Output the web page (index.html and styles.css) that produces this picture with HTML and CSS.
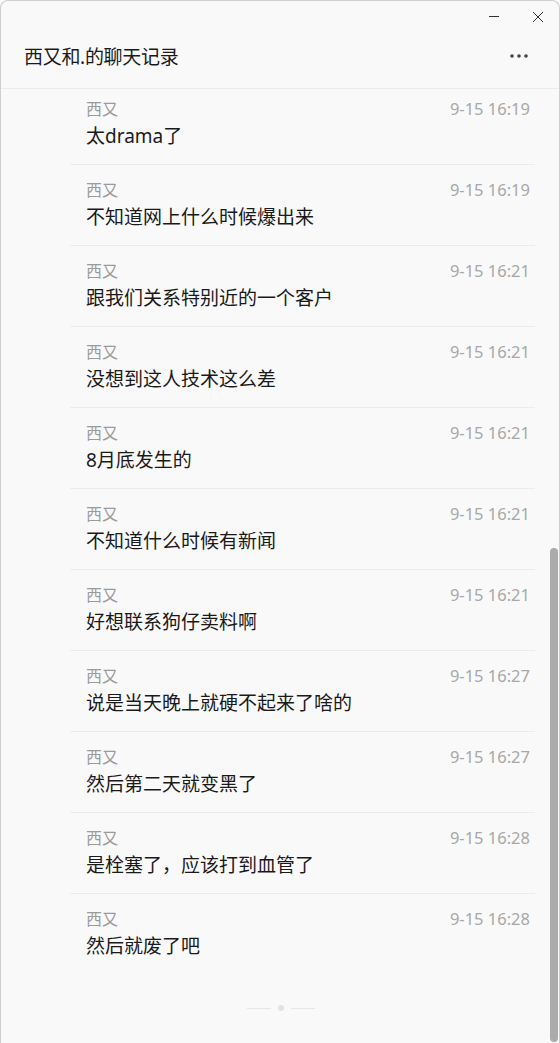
FILE: index.html
```html
<!DOCTYPE html>
<html lang="zh-CN">
<head>
<meta charset="UTF-8">
<title>西又和.的聊天记录</title>
<link rel="stylesheet" href="styles.css">
</head>
<body>

<div class="window">
    <div class="header">
        <div class="caption">
            <span class="cap-btn">
                <svg width="12" height="12" viewBox="0 0 12 12"><path d="M1 5.5h10" stroke="#333" stroke-width="1"/></svg>
            </span>
            <span class="cap-btn">
                <svg width="12" height="12" viewBox="0 0 12 12"><path d="M1 1l10 10M11 1L1 11" stroke="#333" stroke-width="1"/></svg>
            </span>
        </div>
        <div class="title-row">
            <div class="title">西又和.的聊天记录</div>
            <svg class="more" width="20" height="6" viewBox="0 0 20 6"><circle cx="3" cy="3" r="1.8" fill="#444"/><circle cx="10" cy="3" r="1.8" fill="#444"/><circle cx="17" cy="3" r="1.8" fill="#444"/></svg>
        </div>
    </div>

    <div class="list">
        <div class="items">
            <div class="item">
                <div class="meta"><span class="name">西又</span><span class="time">9-15 16:19</span></div>
                <div class="text">太drama了</div>
            </div>
            <div class="item">
                <div class="meta"><span class="name">西又</span><span class="time">9-15 16:19</span></div>
                <div class="text">不知道网上什么时候爆出来</div>
            </div>
            <div class="item">
                <div class="meta"><span class="name">西又</span><span class="time">9-15 16:21</span></div>
                <div class="text">跟我们关系特别近的一个客户</div>
            </div>
            <div class="item">
                <div class="meta"><span class="name">西又</span><span class="time">9-15 16:21</span></div>
                <div class="text">没想到这人技术这么差</div>
            </div>
            <div class="item">
                <div class="meta"><span class="name">西又</span><span class="time">9-15 16:21</span></div>
                <div class="text">8月底发生的</div>
            </div>
            <div class="item">
                <div class="meta"><span class="name">西又</span><span class="time">9-15 16:21</span></div>
                <div class="text">不知道什么时候有新闻</div>
            </div>
            <div class="item">
                <div class="meta"><span class="name">西又</span><span class="time">9-15 16:21</span></div>
                <div class="text">好想联系狗仔卖料啊</div>
            </div>
            <div class="item">
                <div class="meta"><span class="name">西又</span><span class="time">9-15 16:27</span></div>
                <div class="text">说是当天晚上就硬不起来了啥的</div>
            </div>
            <div class="item">
                <div class="meta"><span class="name">西又</span><span class="time">9-15 16:27</span></div>
                <div class="text">然后第二天就变黑了</div>
            </div>
            <div class="item">
                <div class="meta"><span class="name">西又</span><span class="time">9-15 16:28</span></div>
                <div class="text">是栓塞了，应该打到血管了</div>
            </div>
            <div class="item last">
                <div class="meta"><span class="name">西又</span><span class="time">9-15 16:28</span></div>
                <div class="text">然后就废了吧</div>
            </div>
            <div class="end">
                <span class="end-line"></span>
                <span class="end-dot"></span>
                <span class="end-line"></span>
            </div>
        </div>
        <div class="scrollbar"></div>
    </div>
</div>

</body>
</html>
```

FILE: styles.css
```css
html, body {
    height: 100%;
    margin: 0;
    padding: 0;
}
body {
    font-family: "Noto Sans", "Noto Sans CJK SC", sans-serif;
    background: #f9f9f9;
    overflow: hidden;
}
.window {
    box-sizing: border-box;
    height: 1043px;
    border: 1px solid #cfcfcf;
    border-bottom: none;
    border-radius: 8px 8px 0 0;
    background: #f9f9f9;
    display: flex;
    flex-direction: column;
}
.header {
    height: 87px;
    border-bottom: 1px solid #ebebeb;
    flex-shrink: 0;
}
.caption {
    display: flex;
    justify-content: flex-end;
    gap: 32px;
    padding: 10px 15px 0 0;
    height: 22px;
}
.cap-btn {
    display: flex;
    width: 12px;
    height: 12px;
}
.title-row {
    display: flex;
    align-items: center;
    justify-content: space-between;
    padding: 0 30px 0 23px;
    height: 46px;
}
.title {
    font-size: 19px;
    color: #1a1a1a;
    letter-spacing: -0.3px;
}
.list {
    position: relative;
    flex: 1;
    overflow: hidden;
}
.items {
    margin-top: -5px;
    padding: 0 24px 0 69px;
}
.item {
    padding: 14px 5px 14px 16px;
    border-bottom: 1px solid #ececec;
}
.item.last {
    border-bottom: none;
}
.meta {
    display: flex;
    justify-content: space-between;
    align-items: center;
    height: 20px;
}
.name {
    font-size: 16px;
    color: #9b9b9b;
}
.time {
    font-size: 16.5px;
    color: #a8a8a8;
}
.text {
    margin-top: 4px;
    height: 28px;
    line-height: 28px;
    font-size: 19px;
    color: #1a1a1a;
}
.end {
    display: flex;
    align-items: center;
    justify-content: center;
    gap: 7px;
    margin-top: 31px;
    padding-right: 44px;
}
.end-line {
    width: 24px;
    height: 1px;
    background: #e6e6e6;
}
.end-dot {
    width: 6px;
    height: 6px;
    border-radius: 50%;
    background: #e3e3e3;
}
.scrollbar {
    position: absolute;
    right: 1px;
    top: 459px;
    width: 8px;
    height: 494px;
    border-radius: 4px;
    background: #ababab;
}
```
